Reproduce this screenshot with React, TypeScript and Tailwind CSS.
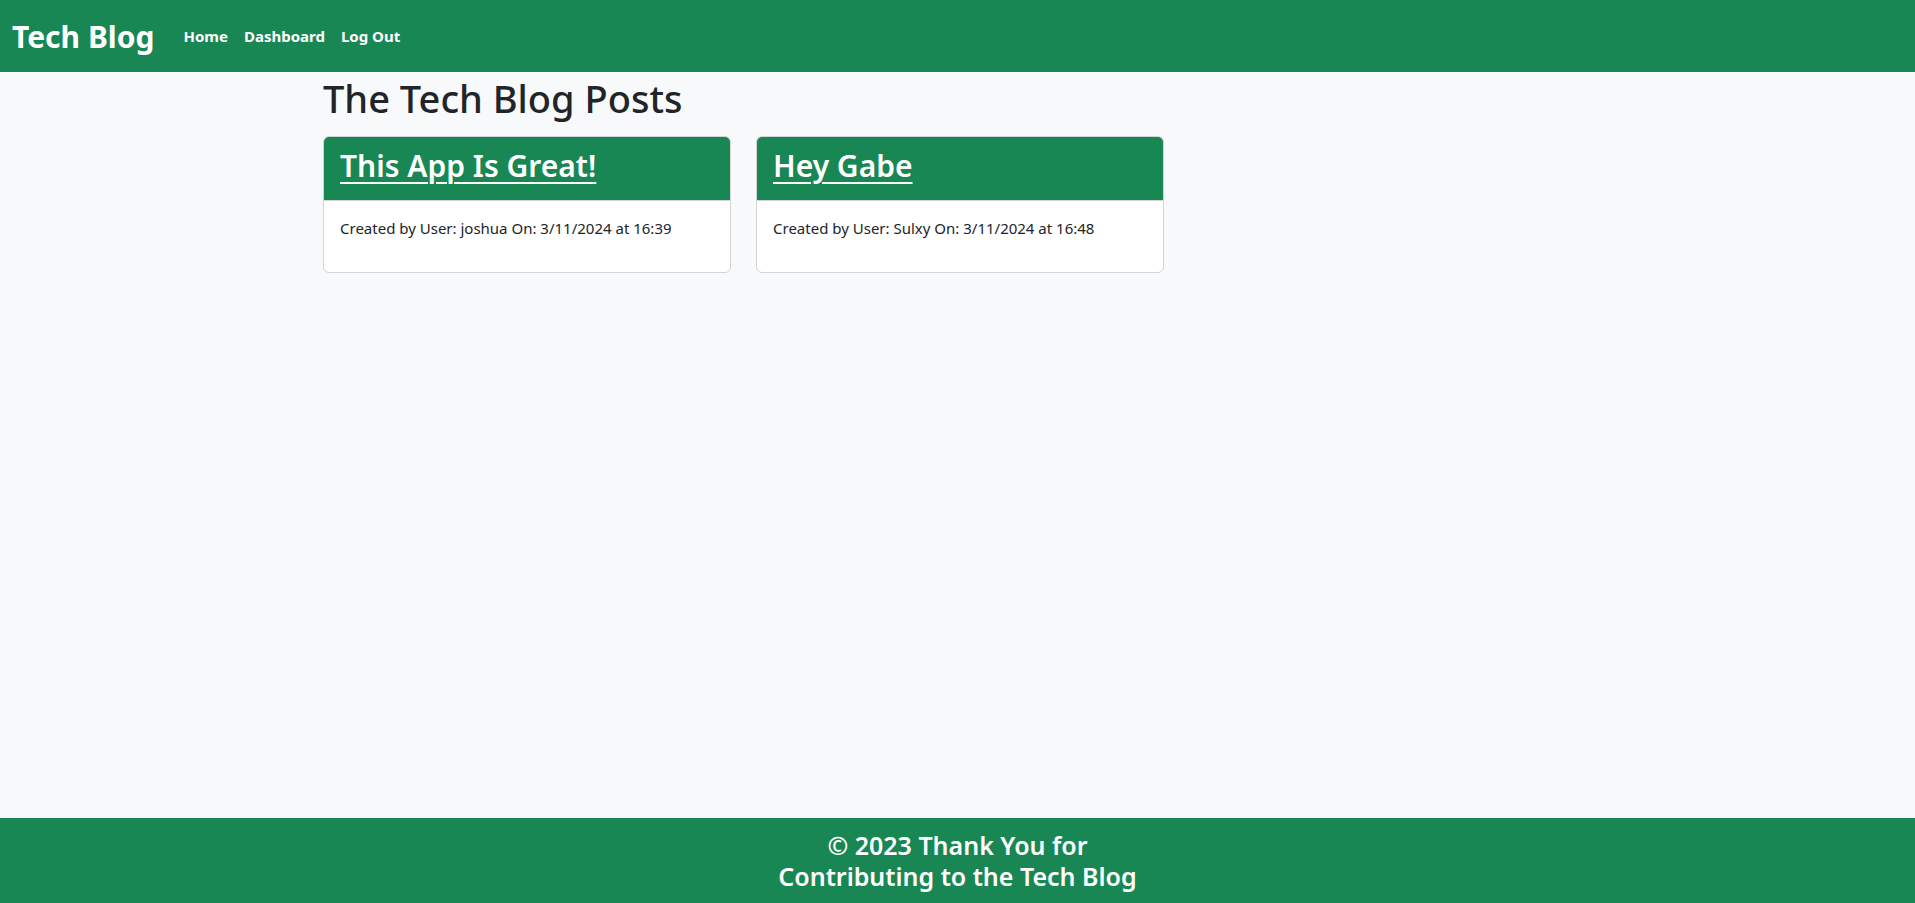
const posts = [
  { title: "This App Is Great!", user: "joshua", date: "3/11/2024 at 16:39" },
  { title: "Hey Gabe", user: "Sulxy", date: "3/11/2024 at 16:48" },
];

function PostCard({ title, user, date }: { title: string; user: string; date: string }) {
  return (
    <div className="w-[408px] overflow-hidden rounded-[6px] border border-[#d3d4d5] bg-white">
      <div className="border-b border-[#d3d4d5] bg-[#198754] px-4 pt-[10px] pb-[15px]">
        <a href="#" className="text-[30px] leading-[38px] font-semibold text-white underline decoration-2 underline-offset-[5px]">
          {title}
        </a>
      </div>
      <div className="px-4 pt-4 pb-[33px] text-[15px] leading-[22px] text-[#212529]">
        Created by User: {user} On: {date}
      </div>
    </div>
  );
}

export default function App() {
  return (
    <div
      className="flex min-h-screen flex-col bg-[#f8f9fa]"
      style={{ fontFamily: '"Noto Sans", "Open Sans", sans-serif' }}
    >
      <nav className="flex h-[72px] items-center bg-[#198754] px-3">
        <a href="#" className="text-[30px] font-bold text-white">
          Tech Blog
        </a>
        <div className="ml-[29px] flex items-center gap-[16px] text-[15px] font-bold text-white">
          <a href="#">Home</a>
          <a href="#">Dashboard</a>
          <a href="#">Log Out</a>
        </div>
      </nav>

      <main className="pl-[323px]">
        <h1 className="mt-[2px] mb-[14px] text-[38px] leading-[48px] font-medium text-[#212529]">
          The Tech Blog Posts
        </h1>
        <div className="flex gap-[25px]">
          {posts.map((p) => (
            <PostCard key={p.title} {...p} />
          ))}
        </div>
      </main>

      <footer className="mt-auto flex h-[85px] flex-col items-center justify-center bg-[#198754] text-center text-[25px] font-semibold text-white">
        <span className="block leading-[31px]">© 2023 Thank You for</span>
        <span className="block leading-[31px]">Contributing to the Tech Blog</span>
      </footer>
    </div>
  );
}
